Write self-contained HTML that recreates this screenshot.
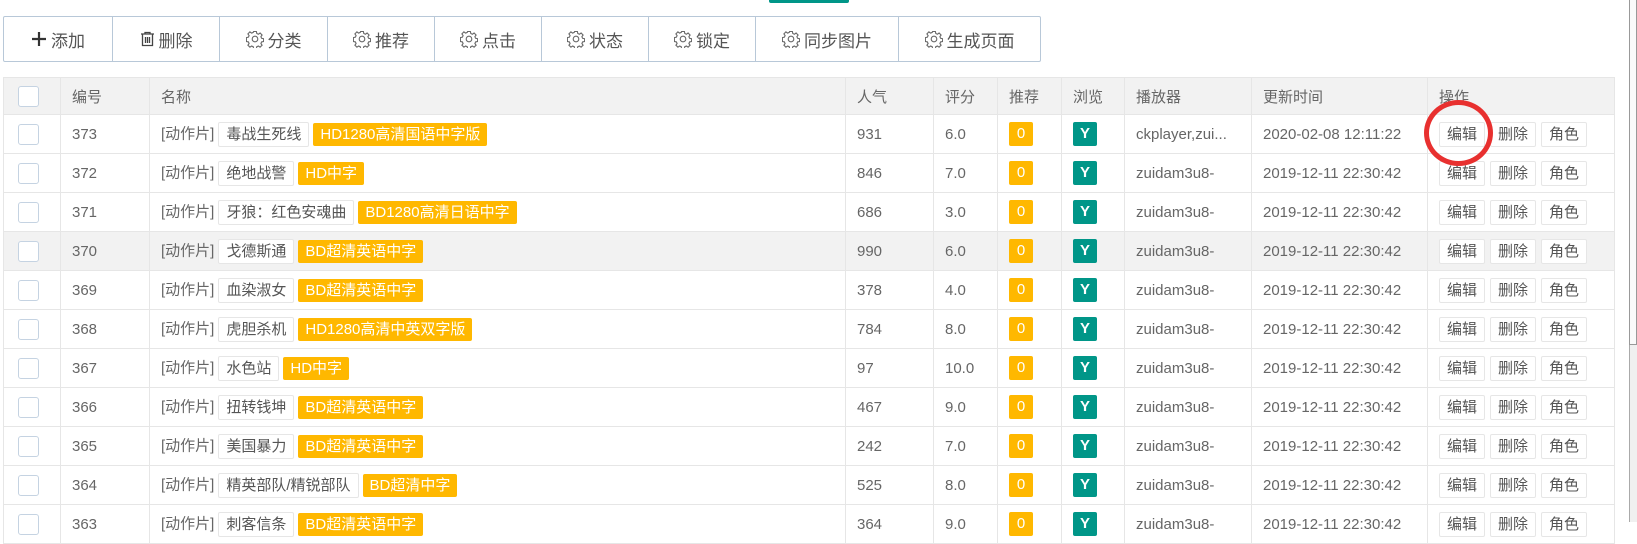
<!DOCTYPE html>
<html><head><meta charset="utf-8">
<style>
*{margin:0;padding:0;box-sizing:border-box}
body{width:1637px;height:522px;overflow:hidden;background:#fff;font-family:"Liberation Sans","Noto Sans CJK SC",sans-serif;color:#666;position:relative}
.teal{position:absolute;left:769px;top:0;width:80px;height:3px;background:#009688;border-radius:0 0 2px 2px}
.tb{position:absolute;left:3px;top:16px;height:46px;display:flex;border:1px solid #b8c8d8;border-radius:2px}
.tb div{height:44px;border-left:1px solid #b8c8d8;display:flex;align-items:center;justify-content:center;font-size:17px;color:#555;gap:4px}
.tb div:first-child{border-left:none}
table{position:absolute;left:3px;top:77px;border-collapse:collapse;table-layout:fixed;width:1611px;font-size:15px}
td,th{border:1px solid #e6e6e6;padding:0 0 0 11px;text-align:left;font-weight:normal;white-space:nowrap;overflow:hidden;color:#666}
th{height:37px;background:#f2f2f2}
td{height:39px}
tr.h td{background:#f2f2f2}
.cb{display:inline-block;width:21px;height:21px;border:1px solid #c5d3e2;border-radius:3px;background:#fff;vertical-align:middle;margin-left:3px}
.nm{display:inline-block;height:25px;line-height:23px;border:1px solid #e6e6e6;border-radius:2px;padding:0 7px;background:#fff;color:#555;margin-left:4px;vertical-align:middle}
.tg{display:inline-block;height:23px;line-height:23px;background:#FFB800;color:#fff;border-radius:2px;padding:0 7px;margin-left:4px;vertical-align:middle}
.b0,.by{display:inline-block;width:24px;height:24px;line-height:24px;text-align:center;color:#fff;border-radius:2px;vertical-align:middle}
.b0{background:#FFB800}.by{background:#009688;font-weight:bold}
.ab{display:inline-block;height:25px;line-height:23px;border:1px solid #e6e6e6;border-radius:2px;padding:0 7px;background:#fff;color:#555;margin-right:5px;vertical-align:middle}
.circ{position:absolute;left:1424px;top:100px;width:69px;height:66px;border:5px solid #e8302f;border-radius:50%}
.sb{position:absolute;left:1629px;top:0;width:8px;height:522px;background:#f0f0f0;border-left:1px solid #aaa}
.th{position:absolute;left:1629px;top:0;width:8px;height:345px;background:#fafafa;border:1px solid #999;border-top:none}
</style></head><body>
<div class="teal"></div>
<div class="tb">
<div style="width:108px"><svg width="16" height="16" viewBox="0 0 16 16"><path d="M8 1v14M1 8h14" stroke="#333" stroke-width="2.2"/></svg>添加</div>
<div style="width:107px"><svg width="15" height="16" viewBox="0 0 15 16"><path d="M1 3h13M5 3V1.5h5V3M2.5 3.5v11h10v-11M5.5 6v6M7.5 6v6M9.5 6v6" stroke="#444" stroke-width="1.3" fill="none"/></svg>删除</div>
<div style="width:108px"><svg width="18" height="18" viewBox="0 0 18 18"><g fill="none" stroke="#666" stroke-width="1.1"><circle cx="9" cy="9" r="2.8"/><path d="M7.6 1.5h2.8l.4 2 1.6.7 1.7-1.2 2 2-1.2 1.7.7 1.6 2 .4v2.8l-2 .4-.7 1.6 1.2 1.7-2 2-1.7-1.2-1.6.7-.4 2H7.6l-.4-2-1.6-.7-1.7 1.2-2-2 1.2-1.7-.7-1.6-2-.4V7.6l2-.4.7-1.6-1.2-1.7 2-2 1.7 1.2 1.6-.7z"/></g></svg>分类</div>
<div style="width:107px"><svg width="18" height="18" viewBox="0 0 18 18"><g fill="none" stroke="#666" stroke-width="1.1"><circle cx="9" cy="9" r="2.8"/><path d="M7.6 1.5h2.8l.4 2 1.6.7 1.7-1.2 2 2-1.2 1.7.7 1.6 2 .4v2.8l-2 .4-.7 1.6 1.2 1.7-2 2-1.7-1.2-1.6.7-.4 2H7.6l-.4-2-1.6-.7-1.7 1.2-2-2 1.2-1.7-.7-1.6-2-.4V7.6l2-.4.7-1.6-1.2-1.7 2-2 1.7 1.2 1.6-.7z"/></g></svg>推荐</div>
<div style="width:107px"><svg width="18" height="18" viewBox="0 0 18 18"><g fill="none" stroke="#666" stroke-width="1.1"><circle cx="9" cy="9" r="2.8"/><path d="M7.6 1.5h2.8l.4 2 1.6.7 1.7-1.2 2 2-1.2 1.7.7 1.6 2 .4v2.8l-2 .4-.7 1.6 1.2 1.7-2 2-1.7-1.2-1.6.7-.4 2H7.6l-.4-2-1.6-.7-1.7 1.2-2-2 1.2-1.7-.7-1.6-2-.4V7.6l2-.4.7-1.6-1.2-1.7 2-2 1.7 1.2 1.6-.7z"/></g></svg>点击</div>
<div style="width:107px"><svg width="18" height="18" viewBox="0 0 18 18"><g fill="none" stroke="#666" stroke-width="1.1"><circle cx="9" cy="9" r="2.8"/><path d="M7.6 1.5h2.8l.4 2 1.6.7 1.7-1.2 2 2-1.2 1.7.7 1.6 2 .4v2.8l-2 .4-.7 1.6 1.2 1.7-2 2-1.7-1.2-1.6.7-.4 2H7.6l-.4-2-1.6-.7-1.7 1.2-2-2 1.2-1.7-.7-1.6-2-.4V7.6l2-.4.7-1.6-1.2-1.7 2-2 1.7 1.2 1.6-.7z"/></g></svg>状态</div>
<div style="width:107px"><svg width="18" height="18" viewBox="0 0 18 18"><g fill="none" stroke="#666" stroke-width="1.1"><circle cx="9" cy="9" r="2.8"/><path d="M7.6 1.5h2.8l.4 2 1.6.7 1.7-1.2 2 2-1.2 1.7.7 1.6 2 .4v2.8l-2 .4-.7 1.6 1.2 1.7-2 2-1.7-1.2-1.6.7-.4 2H7.6l-.4-2-1.6-.7-1.7 1.2-2-2 1.2-1.7-.7-1.6-2-.4V7.6l2-.4.7-1.6-1.2-1.7 2-2 1.7 1.2 1.6-.7z"/></g></svg>锁定</div>
<div style="width:143px"><svg width="18" height="18" viewBox="0 0 18 18"><g fill="none" stroke="#666" stroke-width="1.1"><circle cx="9" cy="9" r="2.8"/><path d="M7.6 1.5h2.8l.4 2 1.6.7 1.7-1.2 2 2-1.2 1.7.7 1.6 2 .4v2.8l-2 .4-.7 1.6 1.2 1.7-2 2-1.7-1.2-1.6.7-.4 2H7.6l-.4-2-1.6-.7-1.7 1.2-2-2 1.2-1.7-.7-1.6-2-.4V7.6l2-.4.7-1.6-1.2-1.7 2-2 1.7 1.2 1.6-.7z"/></g></svg>同步图片</div>
<div style="width:142px"><svg width="18" height="18" viewBox="0 0 18 18"><g fill="none" stroke="#666" stroke-width="1.1"><circle cx="9" cy="9" r="2.8"/><path d="M7.6 1.5h2.8l.4 2 1.6.7 1.7-1.2 2 2-1.2 1.7.7 1.6 2 .4v2.8l-2 .4-.7 1.6 1.2 1.7-2 2-1.7-1.2-1.6.7-.4 2H7.6l-.4-2-1.6-.7-1.7 1.2-2-2 1.2-1.7-.7-1.6-2-.4V7.6l2-.4.7-1.6-1.2-1.7 2-2 1.7 1.2 1.6-.7z"/></g></svg>生成页面</div>
</div>
<table>
<colgroup><col style="width:57px"><col style="width:89px"><col style="width:696px"><col style="width:88px"><col style="width:64px"><col style="width:64px"><col style="width:63px"><col style="width:127px"><col style="width:176px"><col style="width:187px"></colgroup>
<tr><th><span class="cb"></span></th><th>编号</th><th>名称</th><th>人气</th><th>评分</th><th>推荐</th><th>浏览</th><th>播放器</th><th>更新时间</th><th>操作</th></tr>
<tr><td><span class="cb"></span></td><td>373</td><td>[动作片]<span class="nm">毒战生死线</span><span class="tg">HD1280高清国语中字版</span></td><td>931</td><td>6.0</td><td><span class="b0">0</span></td><td><span class="by">Y</span></td><td>ckplayer,zui...</td><td>2020-02-08 12:11:22</td><td><span class="ab">编辑</span><span class="ab">删除</span><span class="ab">角色</span></td></tr>
<tr><td><span class="cb"></span></td><td>372</td><td>[动作片]<span class="nm">绝地战警</span><span class="tg">HD中字</span></td><td>846</td><td>7.0</td><td><span class="b0">0</span></td><td><span class="by">Y</span></td><td>zuidam3u8-</td><td>2019-12-11 22:30:42</td><td><span class="ab">编辑</span><span class="ab">删除</span><span class="ab">角色</span></td></tr>
<tr><td><span class="cb"></span></td><td>371</td><td>[动作片]<span class="nm">牙狼：红色安魂曲</span><span class="tg">BD1280高清日语中字</span></td><td>686</td><td>3.0</td><td><span class="b0">0</span></td><td><span class="by">Y</span></td><td>zuidam3u8-</td><td>2019-12-11 22:30:42</td><td><span class="ab">编辑</span><span class="ab">删除</span><span class="ab">角色</span></td></tr>
<tr class="h"><td><span class="cb"></span></td><td>370</td><td>[动作片]<span class="nm">戈德斯通</span><span class="tg">BD超清英语中字</span></td><td>990</td><td>6.0</td><td><span class="b0">0</span></td><td><span class="by">Y</span></td><td>zuidam3u8-</td><td>2019-12-11 22:30:42</td><td><span class="ab">编辑</span><span class="ab">删除</span><span class="ab">角色</span></td></tr>
<tr><td><span class="cb"></span></td><td>369</td><td>[动作片]<span class="nm">血染淑女</span><span class="tg">BD超清英语中字</span></td><td>378</td><td>4.0</td><td><span class="b0">0</span></td><td><span class="by">Y</span></td><td>zuidam3u8-</td><td>2019-12-11 22:30:42</td><td><span class="ab">编辑</span><span class="ab">删除</span><span class="ab">角色</span></td></tr>
<tr><td><span class="cb"></span></td><td>368</td><td>[动作片]<span class="nm">虎胆杀机</span><span class="tg">HD1280高清中英双字版</span></td><td>784</td><td>8.0</td><td><span class="b0">0</span></td><td><span class="by">Y</span></td><td>zuidam3u8-</td><td>2019-12-11 22:30:42</td><td><span class="ab">编辑</span><span class="ab">删除</span><span class="ab">角色</span></td></tr>
<tr><td><span class="cb"></span></td><td>367</td><td>[动作片]<span class="nm">水色站</span><span class="tg">HD中字</span></td><td>97</td><td>10.0</td><td><span class="b0">0</span></td><td><span class="by">Y</span></td><td>zuidam3u8-</td><td>2019-12-11 22:30:42</td><td><span class="ab">编辑</span><span class="ab">删除</span><span class="ab">角色</span></td></tr>
<tr><td><span class="cb"></span></td><td>366</td><td>[动作片]<span class="nm">扭转钱坤</span><span class="tg">BD超清英语中字</span></td><td>467</td><td>9.0</td><td><span class="b0">0</span></td><td><span class="by">Y</span></td><td>zuidam3u8-</td><td>2019-12-11 22:30:42</td><td><span class="ab">编辑</span><span class="ab">删除</span><span class="ab">角色</span></td></tr>
<tr><td><span class="cb"></span></td><td>365</td><td>[动作片]<span class="nm">美国暴力</span><span class="tg">BD超清英语中字</span></td><td>242</td><td>7.0</td><td><span class="b0">0</span></td><td><span class="by">Y</span></td><td>zuidam3u8-</td><td>2019-12-11 22:30:42</td><td><span class="ab">编辑</span><span class="ab">删除</span><span class="ab">角色</span></td></tr>
<tr><td><span class="cb"></span></td><td>364</td><td>[动作片]<span class="nm">精英部队/精锐部队</span><span class="tg">BD超清中字</span></td><td>525</td><td>8.0</td><td><span class="b0">0</span></td><td><span class="by">Y</span></td><td>zuidam3u8-</td><td>2019-12-11 22:30:42</td><td><span class="ab">编辑</span><span class="ab">删除</span><span class="ab">角色</span></td></tr>
<tr><td><span class="cb"></span></td><td>363</td><td>[动作片]<span class="nm">刺客信条</span><span class="tg">BD超清英语中字</span></td><td>364</td><td>9.0</td><td><span class="b0">0</span></td><td><span class="by">Y</span></td><td>zuidam3u8-</td><td>2019-12-11 22:30:42</td><td><span class="ab">编辑</span><span class="ab">删除</span><span class="ab">角色</span></td></tr>
</table>
<div class="circ"></div>
<div class="sb"></div><div class="th"></div>
</body></html>
